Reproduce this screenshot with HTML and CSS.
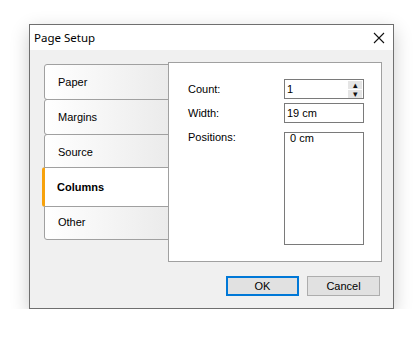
FILE: index.html
```html
<!DOCTYPE html>
<html lang="en">
<head>
    <meta charset="UTF-8">
    <title>Page Setup</title>
    <link rel="stylesheet" href="styles.css">
</head>
<body>
    <div class="dialog">
        <div class="title-bar">
            <span class="title">Page Setup</span>
            <svg class="close" width="12" height="12" viewBox="0 0 12 12">
                <path d="M1 1 L11 11 M11 1 L1 11" stroke="#111" stroke-width="1.1" fill="none"/>
            </svg>
        </div>
        <div class="dialog-body">
            <div class="tab-area">
                <div class="tabs">
                    <div class="tab">Paper</div>
                    <div class="tab">Margins</div>
                    <div class="tab">Source</div>
                    <div class="tab active">Columns</div>
                    <div class="tab">Other</div>
                </div>
                <div class="panel">
                    <div class="field-row">
                        <span class="label">Count:</span>
                        <div class="input spin-input">
                            <span>1</span>
                            <div class="spinner">
                                <div class="spin-btn">&#9652;</div>
                                <div class="spin-btn">&#9662;</div>
                            </div>
                        </div>
                    </div>
                    <div class="field-row width-row">
                        <span class="label">Width:</span>
                        <div class="input"><span>19 cm</span></div>
                    </div>
                    <div class="field-row list-row">
                        <span class="label">Positions:</span>
                        <div class="listbox"><span>0 cm</span></div>
                    </div>
                </div>
            </div>
            <div class="button-row">
                <button class="btn default-btn">OK</button>
                <button class="btn">Cancel</button>
            </div>
        </div>
    </div>
</body>
</html>
```

FILE: styles.css
```css
body {
    margin: 0;
    background-color: #ffffff;
    font-family: 'Liberation Sans', Arial, sans-serif;
    font-size: 11px;
    color: #000000;
}
.dialog {
    margin: 24px 0 0 29px;
    width: 365px;
    height: 285px;
    box-sizing: border-box;
    border: 1px solid #6f6f6f;
    background-color: #f0f0f0;
    box-shadow: 0 6px 18px rgba(0,0,0,0.2);
    display: flex;
    flex-direction: column;
}
.title-bar {
    height: 25px;
    background-color: #ffffff;
    display: flex;
    align-items: center;
    justify-content: space-between;
    padding: 0 8px 0 4px;
}
.title {
    font-family: 'Noto Sans', sans-serif;
    font-size: 11.5px;
    color: #000000;
}
.close {
    display: block;
}
.dialog-body {
    flex: 1;
    padding: 12px 13px 0 14px;
}
.tab-area {
    display: flex;
    align-items: flex-start;
}
.tabs {
    display: flex;
    flex-direction: column;
    flex-shrink: 0;
    width: 125px;
    margin-top: 2px;
    margin-right: -1px;
}
.tab {
    height: 36px;
    box-sizing: border-box;
    border: 1px solid #a0a0a0;
    border-radius: 3px 0 0 3px;
    background: linear-gradient(to right, #ffffff, #ebebeb);
    padding-left: 13px;
    display: flex;
    align-items: center;
    margin-top: -1px;
}
.tab:first-child {
    margin-top: 0;
}
.tab.active {
    height: 40px;
    margin: -3px 0 -2px -2px;
    background: #ffffff;
    border-left: 3px solid #f7a20c;
    padding-left: 12px;
    font-weight: bold;
    position: relative;
}
.panel {
    flex-shrink: 0;
    width: 214px;
    height: 200px;
    box-sizing: border-box;
    border: 1px solid #a0a0a0;
    background-color: #ffffff;
    padding: 16px 17px 0 19px;
    position: relative;
}
.field-row {
    display: flex;
    justify-content: space-between;
    align-items: center;
    margin-bottom: 4px;
}
.width-row {
    margin-bottom: 9px;
}
.list-row {
    align-items: flex-start;
}
.list-row .label {
    margin-top: -1px;
}
.input {
    width: 80px;
    height: 20px;
    box-sizing: border-box;
    border: 1px solid #7a7a7a;
    background-color: #ffffff;
    display: flex;
    align-items: center;
    padding-left: 2px;
}
.spin-input {
    justify-content: space-between;
    padding-right: 1px;
}
.spinner {
    display: flex;
    flex-direction: column;
    gap: 1px;
}
.spin-btn {
    width: 14px;
    height: 8px;
    background-color: #e5e5e5;
    font-size: 9px;
    line-height: 8px;
    text-align: center;
    color: #111;
}
.listbox {
    width: 80px;
    height: 113px;
    box-sizing: border-box;
    border: 1px solid #7a7a7a;
    padding: 0 0 0 5px;
    line-height: 10px;
}
.button-row {
    display: flex;
    justify-content: flex-end;
    gap: 8px;
    margin-top: 14px;
}
.btn {
    width: 73px;
    height: 20px;
    box-sizing: border-box;
    border: 1px solid #adadad;
    background-color: #e1e1e1;
    font-family: 'Liberation Sans', Arial, sans-serif;
    font-size: 11px;
    color: #000;
    padding: 0;
}
.default-btn {
    border: 2px solid #0078d7;
}
```
